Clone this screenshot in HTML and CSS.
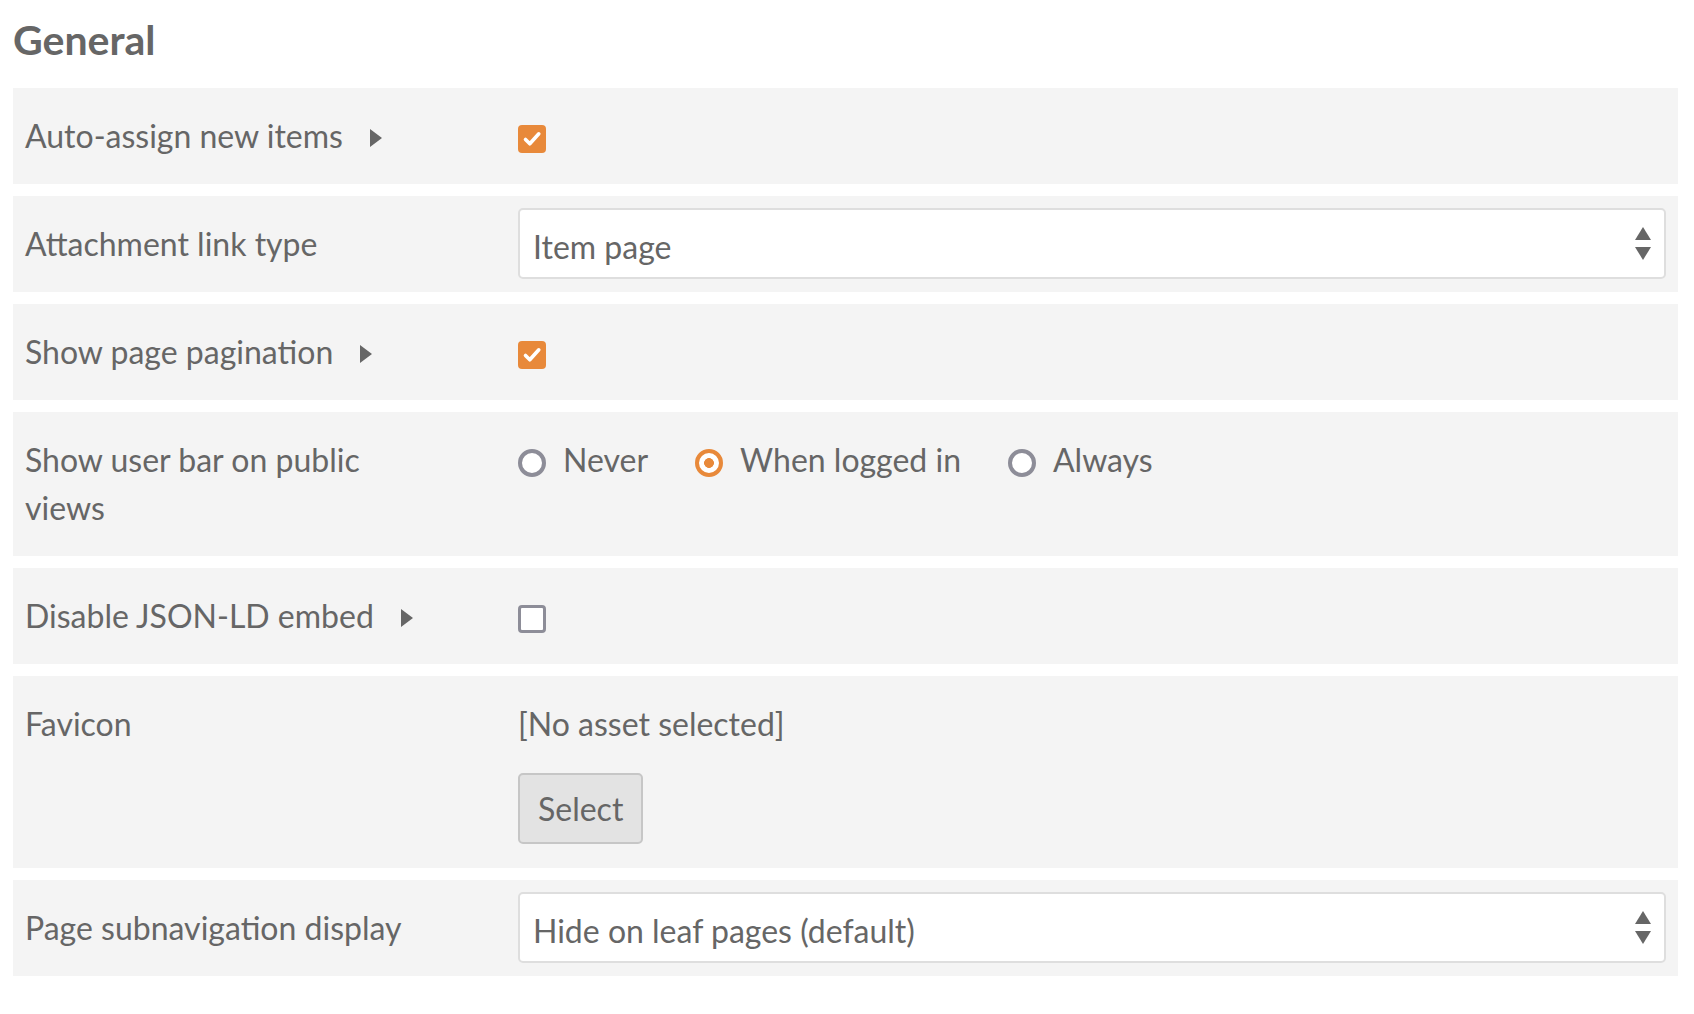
FILE: index.html
```html
<!DOCTYPE html>
<html lang="en">
<head>
<meta charset="utf-8">
<title>General settings</title>
<link rel="stylesheet" href="styles.css">
</head>
<body>
<h1 class="title">General</h1>
<div class="form">
  <div class="row">
    <div class="label"><span class="label-text">Auto-assign new items</span><span class="caret"></span></div>
    <div class="control control-check">
      <span class="checkbox checked"><svg viewBox="0 0 28 28" width="28" height="28"><path d="M7.5 14.5 L11.8 18.8 L20.8 8.8" fill="none" stroke="#fff" stroke-width="3.6" stroke-linecap="round" stroke-linejoin="round"/></svg></span>
    </div>
  </div>
  <div class="row">
    <div class="label"><span class="label-text">Attachment link type</span></div>
    <div class="control">
      <div class="select"><span class="select-value">Item page</span><svg class="select-arrows" viewBox="0 0 16 34" width="16" height="34"><path d="M8 0 L16 13 L0 13 Z" fill="#666"/><path d="M0 20 L16 20 L8 33 Z" fill="#666"/></svg></div>
    </div>
  </div>
  <div class="row">
    <div class="label"><span class="label-text">Show page pagination</span><span class="caret"></span></div>
    <div class="control control-check">
      <span class="checkbox checked"><svg viewBox="0 0 28 28" width="28" height="28"><path d="M7.5 14.5 L11.8 18.8 L20.8 8.8" fill="none" stroke="#fff" stroke-width="3.6" stroke-linecap="round" stroke-linejoin="round"/></svg></span>
    </div>
  </div>
  <div class="row">
    <div class="label"><span class="label-text">Show user bar on public views</span></div>
    <div class="control radios">
      <label class="radio-option"><span class="radio"></span><span class="radio-text">Never</span></label>
      <label class="radio-option"><span class="radio selected"></span><span class="radio-text">When logged in</span></label>
      <label class="radio-option"><span class="radio"></span><span class="radio-text">Always</span></label>
    </div>
  </div>
  <div class="row">
    <div class="label"><span class="label-text">Disable JSON-LD embed</span><span class="caret"></span></div>
    <div class="control control-check">
      <span class="checkbox"></span>
    </div>
  </div>
  <div class="row">
    <div class="label"><span class="label-text">Favicon</span></div>
    <div class="control asset">
      <div class="asset-name">[No asset selected]</div>
      <button class="btn" type="button">Select</button>
    </div>
  </div>
  <div class="row">
    <div class="label"><span class="label-text">Page subnavigation display</span></div>
    <div class="control">
      <div class="select"><span class="select-value">Hide on leaf pages (default)</span><svg class="select-arrows" viewBox="0 0 16 34" width="16" height="34"><path d="M8 0 L16 13 L0 13 Z" fill="#666"/><path d="M0 20 L16 20 L8 33 Z" fill="#666"/></svg></div>
    </div>
  </div>
</div>
</body>
</html>
```
FILE: styles.css
```css
html, body {
  background: #fff;
}
body {
  margin: 0;
  padding: 0 16px 0 13px;
  font-family: Lato, "Open Sans", "Liberation Sans", sans-serif;
  color: #666;
}
.title {
  margin: 16px 0 24px;
  font-size: 41px;
  line-height: 48px;
  font-weight: 700;
  color: #666;
}
.row {
  display: grid;
  grid-template-columns: 493px 1fr;
  padding: 12px;
  margin-bottom: 12px;
  background: #f4f4f4;
}
.label {
  padding: 12px 0;
  font-size: 32px;
  line-height: 48px;
  max-width: 390px;
}
.caret {
  display: inline-block;
  width: 0;
  height: 0;
  margin-left: 27px;
  border-left: 12px solid #666;
  border-top: 9.5px solid transparent;
  border-bottom: 9.5px solid transparent;
  vertical-align: 1px;
}
.control {
  min-width: 0;
}
.control-check {
  padding-top: 25px;
}
.checkbox {
  display: block;
  width: 28px;
  height: 28px;
  box-sizing: border-box;
  border-radius: 4px;
  border: 3.3px solid #8d8d98;
  background: #fff;
}
.checkbox.checked {
  border: none;
  background: #e8893a;
}
.checkbox svg {
  display: block;
}
.select {
  display: flex;
  align-items: center;
  justify-content: space-between;
  height: 71px;
  box-sizing: border-box;
  padding: 6px 13px 0 13px;
  border: 2px solid #dedede;
  border-radius: 5px;
  background: #fff;
  font-size: 32px;
  line-height: 38px;
}
.select-value {
  white-space: nowrap;
}
.select-arrows {
  display: block;
  margin-top: -6px;
}
.radios {
  display: flex;
  align-items: flex-start;
  gap: 47px;
  padding-top: 12px;
  font-size: 32px;
  line-height: 48px;
}
.radio-option {
  display: flex;
  align-items: flex-start;
  gap: 17px;
}
.radio {
  display: block;
  width: 28px;
  height: 28px;
  margin-top: 13px;
  box-sizing: border-box;
  border-radius: 50%;
  border: 4px solid #8d8d98;
  background: #fff;
}
.radio.selected {
  border-color: #e8893a;
  background: radial-gradient(circle, #e8893a 0 4.6px, #fff 5.2px);
}
.asset {
  padding-top: 12px;
  padding-bottom: 12px;
}
.asset-name {
  font-size: 32px;
  line-height: 48px;
}
.btn {
  display: block;
  margin-top: 25px;
  height: 71px;
  padding: 0 18px;
  border: 2px solid #c6c6c6;
  border-radius: 5px;
  background: #e3e3e3;
  font-family: Lato, "Open Sans", "Liberation Sans", sans-serif;
  font-size: 32px;
  line-height: 38px;
  color: #666;
}
```
